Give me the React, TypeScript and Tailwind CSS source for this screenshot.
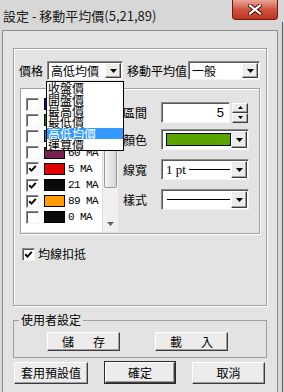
import React from 'react';

const cjk = "font-['Noto_Sans_CJK_TC','Noto_Sans_CJK_JP',sans-serif]";

const sunken =
  'border border-[#8a8a8a] border-b-[#f4f4f4] border-r-[#f4f4f4] shadow-[inset_1px_1px_0_#5a5a5a]';
const raised =
  'bg-[#ececec] border border-t-white border-l-white border-r-[#3c3c3c] border-b-[#3c3c3c] shadow-[inset_-1px_-1px_0_#a0a0a0]';
const etched = 'border border-[#a0a0a0] shadow-[inset_1px_1px_0_#fff,1px_1px_0_#fff]';

const Arrow = () => (
  <svg width="7" height="4" viewBox="0 0 7 4">
    <path d="M0 0h7L3.5 4z" fill="#000" />
  </svg>
);

const DropBtn = () => (
  <div className={`w-[16px] h-full flex items-center justify-center ${raised}`}>
    <Arrow />
  </div>
);

const Combo: React.FC<{ w: string; h?: string; children?: React.ReactNode }> = ({ w, h = 'h-[19px]', children }) => (
  <div className={`${w} ${h} flex bg-white p-[1px] ${sunken}`}>
    <div className="flex-1 flex items-center overflow-hidden">{children}</div>
    <DropBtn />
  </div>
);

const Check: React.FC<{ on?: boolean }> = ({ on }) => (
  <div className={`w-[13px] h-[13px] shrink-0 bg-white flex items-center justify-center ${sunken}`}>
    {on && (
      <svg width="9" height="9" viewBox="0 0 9 9">
        <path d="M1.2 4.2l2.3 2.4L7.8 1.8" stroke="#000" strokeWidth="2" fill="none" />
      </svg>
    )}
  </div>
);

const rows = [
  { on: false, color: '#1010d0', label: '3 MA' },
  { on: false, color: '#008000', label: '10 MA' },
  { on: false, color: '#0080c0', label: '20 MA' },
  { on: false, color: '#7a1f52', label: '60 MA' },
  { on: true, color: '#e00000', label: '5 MA' },
  { on: true, color: '#0a0a0a', label: '21 MA' },
  { on: true, color: '#ff9a00', label: '89 MA' },
  { on: false, color: '#0a0a0a', label: '0 MA' },
];

const options = ['收盤價', '開盤價', '最高價', '最低價', '高低均價', '運算價'];

const Button: React.FC<{ w: string; h: string; children: React.ReactNode }> = ({ w, h, children }) => (
  <div className={`${w} ${h} flex items-center justify-center text-[12px] leading-[14px] text-black ${raised}`}>
    {children}
  </div>
);

export default function App() {
  return (
    <div className={`relative w-[284px] h-[392px] overflow-hidden bg-[#d7d7d7] flex flex-col ${cjk} text-black`}>
      {/* title bar */}
      <div className="h-[30px] flex items-start shrink-0">
        <div className="pl-[3px] pt-[7px] text-[13px] leading-[17px] text-[#1b1b1b]">設定 - 移動平均價(5,21,89)</div>
        <div className="ml-auto mr-[6px] w-[46px] h-[20px] rounded-b-[4px] border border-t-0 border-[#6b1a12] bg-gradient-to-b from-[#e9a596] via-[#d0533f] to-[#c0321f] flex items-center justify-center">
          <svg width="14" height="11" viewBox="0 0 14 11">
            <path d="M2 1.5l10 8M12 1.5l-10 8" stroke="#3b0b06" strokeWidth="4" strokeLinecap="square" />
            <path d="M2 1.5l10 8M12 1.5l-10 8" stroke="#fff" strokeWidth="2.2" strokeLinecap="square" />
          </svg>
        </div>
      </div>

      {/* client area */}
      <div className="ml-[2px] w-[276px] flex-1 border border-b-0 border-[#8e8e8e] bg-[#e3e3e3] flex flex-col">
        {/* main group */}
        <div className={`mt-[17px] ml-[10px] w-[254px] h-[258px] shrink-0 flex flex-col ${etched}`}>
          <div className="mt-[12px] flex items-center h-[19px]">
            <div className="ml-[5px] w-[28px] text-[12px] leading-[14px]">價格</div>
            <Combo w="w-[76px]">
              <span className="pl-[2px] text-[12px] leading-[14px]">高低均價</span>
            </Combo>
            <div className="ml-[4px] w-[61px] text-[12px] leading-[14px]">移動平均值</div>
            <Combo w="w-[72px]">
              <span className="pl-[2px] text-[12px] leading-[14px]">一般</span>
            </Combo>
          </div>

          {/* line group */}
          <div className={`mt-[8px] ml-[6px] w-[240px] h-[146px] flex ${etched}`}>
            <div className="w-[97px] h-[142px] mt-[1px] bg-white flex">
              <div className="flex-1 pt-[6px] pl-[5px] overflow-hidden">
                {rows.map((r) => (
                  <div key={r.label} className="h-[16.2px] flex items-center">
                    <Check on={r.on} />
                    <div className="ml-[5px] w-[21px] h-[12px] border border-black shrink-0" style={{ backgroundColor: r.color }} />
                    <span className="ml-[3px] font-['Liberation_Mono',monospace] text-[11px] tracking-[-0.6px] leading-[14px] whitespace-nowrap">
                      {r.label}
                    </span>
                  </div>
                ))}
              </div>
              <div className="w-[16px] bg-[#f0f0f0] border-l border-[#e0e0e0] flex flex-col">
                <div className="h-[17px]" />
                <div className="h-[81px] mx-[1px] rounded-[2px] border border-[#979797] bg-gradient-to-r from-[#f4f4f4] to-[#d6d6d6]" />
                <div className="flex-1" />
                <div className="h-[16px] flex items-center justify-center">
                  <svg width="7" height="4" viewBox="0 0 7 4">
                    <path d="M0 0h7L3.5 4z" fill="#606060" />
                  </svg>
                </div>
              </div>
            </div>

            <div className="ml-[5px] flex flex-col">
              <div className="mt-[13px] h-[21px] flex items-center">
                <div className="w-[38px] text-[12px] leading-[14px]">區間</div>
                <div className={`w-[69px] h-[21px] bg-white flex items-center justify-end pr-[5px] font-['Liberation_Sans',sans-serif] text-[13px] ${sunken}`}>
                  5
                </div>
                <div className="ml-[2px] w-[16px] h-[20px] flex flex-col">
                  <div className={`flex-1 flex items-center justify-center ${raised}`}>
                    <svg width="5" height="3" viewBox="0 0 5 3"><path d="M0 3h5L2.5 0z" fill="#000" /></svg>
                  </div>
                  <div className={`flex-1 flex items-center justify-center ${raised}`}>
                    <svg width="5" height="3" viewBox="0 0 5 3"><path d="M0 0h5L2.5 3z" fill="#000" /></svg>
                  </div>
                </div>
              </div>
              <div className="mt-[6px] h-[21px] flex items-center">
                <div className="w-[38px] text-[12px] leading-[14px]">顏色</div>
                <Combo w="w-[88px]" h="h-[21px]">
                  <div className="ml-[3px] w-[66px] h-[13px] border border-black bg-[#5aa400]" />
                </Combo>
              </div>
              <div className="mt-[9px] h-[21px] flex items-center">
                <div className="w-[38px] text-[12px] leading-[14px]">線寬</div>
                <Combo w="w-[88px]" h="h-[21px]">
                  <span className="pl-[3px] font-['Liberation_Serif',serif] text-[13px] leading-[15px]">1 pt</span>
                  <div className="ml-[3px] w-[41px] h-[1px] bg-black" />
                </Combo>
              </div>
              <div className="mt-[9px] h-[21px] flex items-center">
                <div className="w-[38px] text-[12px] leading-[14px]">樣式</div>
                <Combo w="w-[88px]" h="h-[21px]">
                  <div className="ml-[4px] w-[63px] h-[1px] bg-black" />
                </Combo>
              </div>
            </div>
          </div>

          <div className="mt-[13px] ml-[8px] flex items-center">
            <Check on />
            <span className="ml-[3px] text-[12px] leading-[14px]">均線扣抵</span>
          </div>
        </div>

        {/* user settings */}
        <fieldset className="mt-[7px] ml-[10px] w-[254px] border border-[#a0a0a0] pb-[6px] shrink-0">
          <legend className="ml-[5px] px-[2px] text-[12px] leading-[14px]">使用者設定</legend>
          <div className="mt-[5px] ml-[33px] flex gap-[35px]">
            <Button w="w-[73px]" h="h-[19px]">
              <span>儲</span>
              <span className="ml-[19px]">存</span>
            </Button>
            <Button w="w-[73px]" h="h-[19px]">
              <span>載</span>
              <span className="ml-[19px]">入</span>
            </Button>
          </div>
        </fieldset>

        <div className="mt-[3px] ml-[11px] flex items-center">
          <Button w="w-[74px]" h="h-[22px]">套用預設值</Button>
          <div className="ml-[16px] border border-[#2a2a2a]">
            <Button w="w-[70px]" h="h-[21px]">確定</Button>
          </div>
          <div className="ml-[16px]">
            <Button w="w-[73px]" h="h-[22px]">取消</Button>
          </div>
        </div>
      </div>

      <div className="absolute right-[1px] top-[22px] bottom-0 w-[1px] bg-[#5e5e5e]" />

      {/* dropdown list */}
      <div className="absolute left-[46px] top-[81px] w-[78px] h-[70px] bg-white border border-black">
        {options.map((o) => (
          <div
            key={o}
            className={`h-[11.4px] flex items-center pl-[1px] text-[12px] leading-[11px] ${o === '高低均價' ? 'bg-[#3399ff] text-white' : 'text-black'}`}
          >
            {o}
          </div>
        ))}
      </div>
    </div>
  );
}
